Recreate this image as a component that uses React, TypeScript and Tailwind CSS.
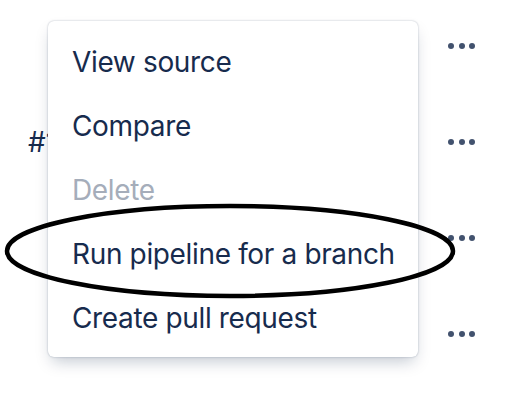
import React from "react";

const rows = [0, 1, 2, 3];

function Dots() {
  return (
    <div className="flex items-center gap-[4.5px]">
      <span className="block h-[6px] w-[6px] rounded-full bg-[#42526E]" />
      <span className="block h-[6px] w-[6px] rounded-full bg-[#42526E]" />
      <span className="block h-[6px] w-[6px] rounded-full bg-[#42526E]" />
    </div>
  );
}

const items = [
  { label: "View source", disabled: false },
  { label: "Compare", disabled: false },
  { label: "Delete", disabled: true },
  { label: "Run pipeline for a branch", disabled: false },
  { label: "Create pull request", disabled: false },
];

export default function App() {
  return (
    <div
      className="relative h-[402px] w-[528px] overflow-hidden bg-white"
      style={{ fontFamily: "Inter, 'Noto Sans', sans-serif" }}
    >
      {/* underlying table rows */}
      <div className="mt-[-2px] flex flex-col">
        {rows.map((r) => (
          <div key={r} className="flex h-[96px] items-center pl-[28px] pr-[53px]">
            <div className="flex-1">
              {r === 1 ? (
                <div className="w-[20px] overflow-hidden whitespace-nowrap text-[28px] text-[#172B4D]">
                  #1234
                </div>
              ) : null}
            </div>
            <Dots />
          </div>
        ))}
      </div>

      {/* dropdown menu */}
      <div className="absolute left-[48px] top-[21px] w-[370px] rounded-[6px] bg-white py-2 shadow-[0_8px_16px_-4px_rgba(9,30,66,0.25),0_0_2px_rgba(9,30,66,0.31)]">
        {items.map((it) => (
          <div
            key={it.label}
            className={`flex h-[64px] items-center pl-6 pt-[2px] text-[28px] tracking-[-0.35px] ${
              it.disabled ? "text-[#A5ADBA]" : "text-[#172B4D]"
            }`}
          >
            {it.label}
          </div>
        ))}
      </div>

      {/* annotation ellipse */}
      <svg
        className="pointer-events-none absolute left-0 top-0"
        width="528"
        height="402"
        viewBox="0 0 528 402"
      >
        <ellipse cx="230" cy="251" rx="223" ry="45" fill="none" stroke="#000" strokeWidth="4.5" />
      </svg>
    </div>
  );
}
